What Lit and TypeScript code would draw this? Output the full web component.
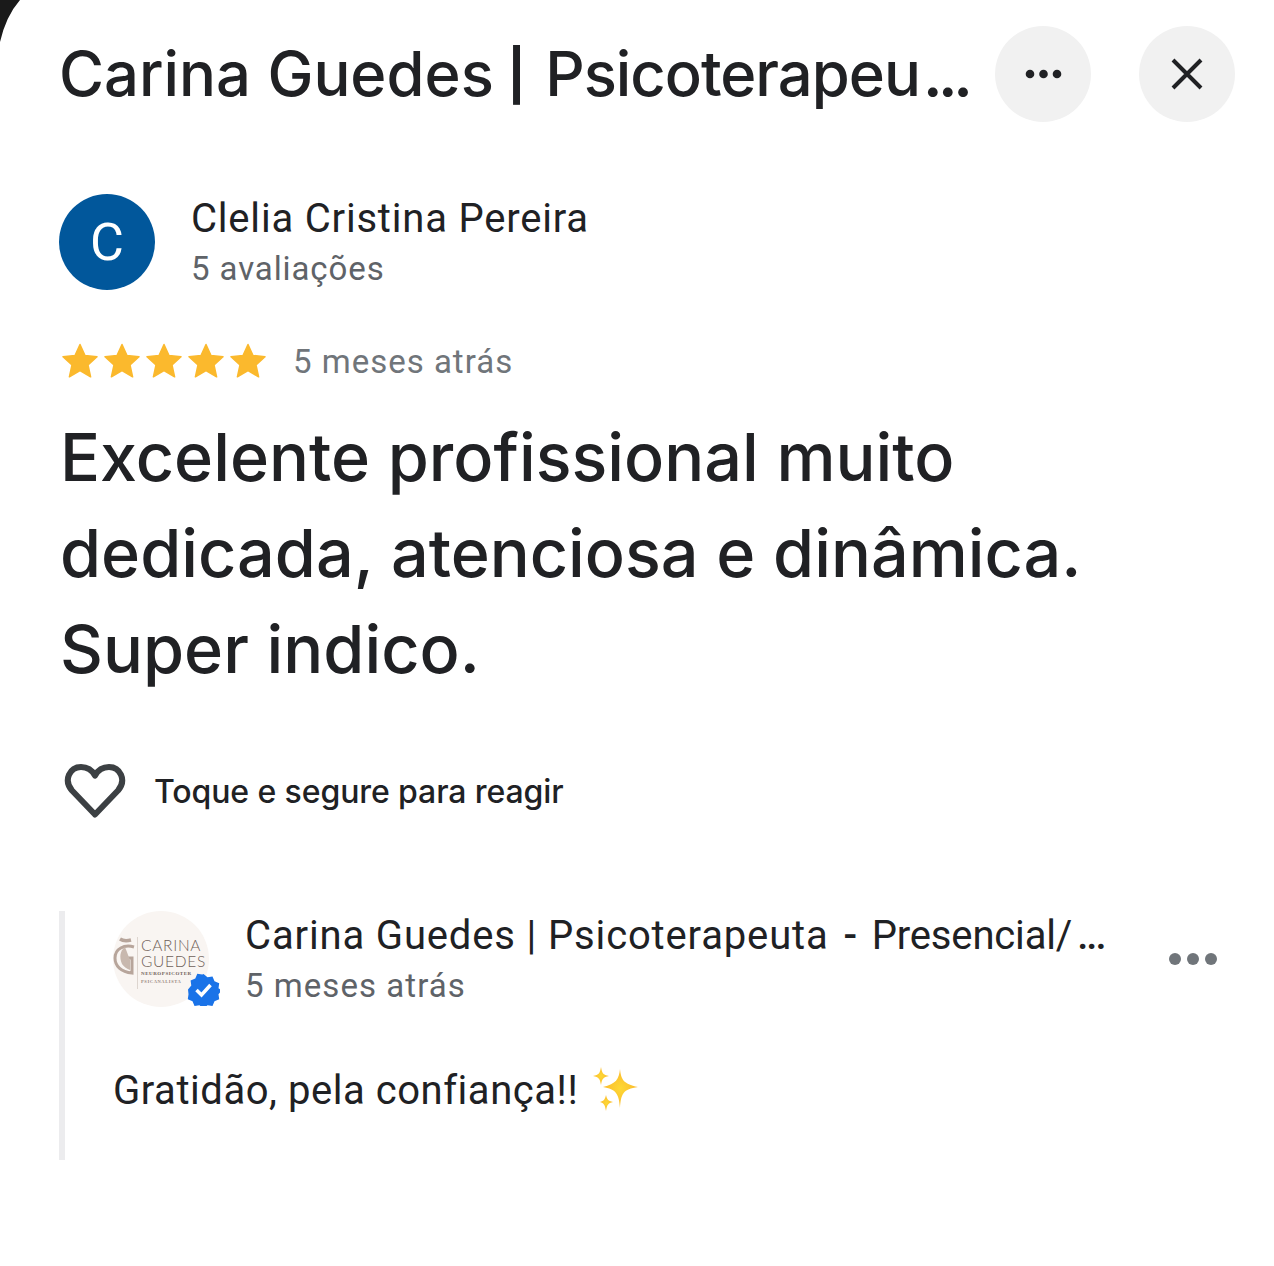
import { LitElement, html, css, svg } from "lit";
import { customElement } from "lit/decorators.js";

const star = svg`<path d="M18 1.5l5 11 12 1.3-9 8.100 2.600 11.900L18 27.700 7.400 33.800 10 21.900 1 13.800l12-1.300z" fill="#fbb92d" stroke="#fbb92d" stroke-width="1.500" stroke-linejoin="round"/>`;

@customElement("app-root")
export class AppRoot extends LitElement {
  static styles = css`
    :host { display: block; width: 1274px; height: 1266px; background: #fff; color: #202124; position: relative; overflow: hidden; font-family: Roboto, sans-serif; }
    .corner { position: absolute; left: 0; top: 0; width: 22px; height: 44px; }
    .page { display: flex; flex-direction: column; padding: 26px 39px 0 59px; box-sizing: border-box; height: 100%; }
    .head { display: flex; align-items: center; height: 96px; }
    .title { flex: 0 0 911px; min-width: 0; font: 500 61.500px/96px "Inter", sans-serif; color: #202124; white-space: nowrap; }
    .tight { word-spacing: -3px; }
    .pipe { font-size: 50px; font-weight: 700; vertical-align: 3px; }
    .tail { letter-spacing: -1px; margin-left: 3px; }
    .dots { letter-spacing: -4.500px; margin-left: 3px; font-weight: 600; }
    .btn { width: 96px; height: 96px; border-radius: 50%; background: #f1f1f1; display: flex; align-items: center; justify-content: center; flex: none; }
    .btn.more { margin-left: 25px; }
    .btn.close { margin-left: 48px; }
    .author { display: flex; align-items: center; gap: 37px; margin-top: 72px; height: 96px; }
    .avatar { width: 96px; height: 96px; border-radius: 50%; background: #01579b; color: #fff; font: 400 52px/97px Roboto, sans-serif; text-align: center; flex: none; }
    .who { padding-top: 4px; margin-left: -1px; }
    .name { font-size: 40px; line-height: 50px; letter-spacing: 0.8px; color: #202124; white-space: nowrap; }
    .sub { font-size: 33px; line-height: 50px; letter-spacing: 0.9px; color: #5f6368; white-space: nowrap; }
    .rating { display: flex; align-items: center; margin-top: 49px; height: 44px; padding-left: 3px; }
    .stars { display: flex; gap: 6px; }
    .stars svg { width: 36px; height: 36px; display: block; }
    .when { margin-left: 27px; font-size: 33px; letter-spacing: 1px; color: #70757a; white-space: nowrap; }
    .body { margin: 26px 0 0 1px; font: 500 66.500px/96px "Inter", sans-serif; color: #202124; white-space: nowrap; }
    .react { display: flex; align-items: center; margin-top: 62px; height: 64px; padding-left: 5px; gap: 28px; }
    .react svg { width: 62px; height: 56px; display: block; flex: none; }
    .react span { font: 500 32px/40px "Inter", sans-serif; letter-spacing: -0.100px; white-space: nowrap; padding-top: 2px; }
    .reply { display: flex; flex-direction: column; margin-top: 88px; height: 249px; border-left: 6px solid #ececee; padding-left: 48px; box-sizing: border-box; }
    .rhead { display: flex; align-items: center; height: 96px; }
    .logo { position: relative; width: 96px; height: 96px; flex: none; }
    .disc { width: 96px; height: 96px; border-radius: 50%; background: #f9f5f2; overflow: hidden; display: flex; color: #6f5f58; }
    .mono { width: 24px; height: 40px; flex: none; margin: 25px 0 0 0; }
    .words { margin: 26px 0 0 0; padding-left: 3px; border-left: 1px solid #ddd5cf; height: 52px; font-family: Lato, sans-serif; font-weight: 300; white-space: nowrap; }
    .w1 { font-size: 15.500px; line-height: 16px; letter-spacing: 0.7px; }
    .w3 { font-family: "Liberation Serif", serif; font-size: 5px; line-height: 9px; font-weight: 700; letter-spacing: 0.55px; }
    .w4 { font-family: "Liberation Serif", serif; font-size: 4.500px; line-height: 8px; font-weight: 700; letter-spacing: 0.6px; color: #998880; }
    .badge { position: absolute; left: 74px; top: 62px; width: 33px; height: 33px; }
    .rtext { flex: 0 0 863px; width: 863px; margin-left: 36px; min-width: 0; padding-top: 4px; }
    .rtext .sub { letter-spacing: 1.050px; }
    .rname { font-size: 40px; line-height: 50px; letter-spacing: 0.85px; white-space: nowrap; }
    .dash { padding: 0 3px 0 4px; font-weight: 500; }
    .place { letter-spacing: -0.150px; }
    .rdots { letter-spacing: -2px; margin-left: 5px; font-weight: 500; }
    .rmore { margin: 0 0 0 60px; width: 50px; height: 16px; flex: none; }
    .rbody { display: flex; align-items: center; margin-top: 51px; height: 64px; font-size: 40px; letter-spacing: 0.54px; white-space: nowrap; }
    .spark { width: 50px; height: 48px; margin-left: 13px; flex: none; }
  `;

  render() {
    return html`
      <svg class="corner" viewBox="0 0 22 44"><path d="M0 0H20Q6 16 0 42Z" fill="#1a1a1a"/></svg>
      <div class="page">
        <div class="head">
          <div class="title">Carina Guedes<span class="tight"> </span><span class="pipe">|</span> <span class="tail">Psicoterapeu</span><span class="dots">...</span></div>
          <div class="btn more"><svg width="40" height="12" viewBox="0 0 40 12"><g fill="#202124"><circle cx="7" cy="6" r="4.300"/><circle cx="20.500" cy="6" r="4.300"/><circle cx="34" cy="6" r="4.300"/></g></svg></div>
          <div class="btn close"><svg width="34" height="34" viewBox="0 0 34 34"><path d="M3 3L31 31M31 3L3 31" stroke="#202124" stroke-width="4" fill="none"/></svg></div>
        </div>
        <div class="author">
          <div class="avatar">C</div>
          <div class="who">
            <div class="name">Clelia Cristina Pereira</div>
            <div class="sub">5 avaliações</div>
          </div>
        </div>
        <div class="rating">
          <div class="stars">${[0, 1, 2, 3, 4].map(() => html`<svg viewBox="0 0 36 36">${star}</svg>`)}</div>
          <div class="when">5 meses atrás</div>
        </div>
        <div class="body">Excelente profissional muito<br />dedicada, atenciosa e dinâmica.<br />Super indico.</div>
        <div class="react">
          <svg viewBox="0 0 62 56"><path d="M31 51.500L8 27.500C-1 17 6 4 17 4c6 0 11 3 14 8.500C34 7 39 4 45 4c11 0 18 13 9 23.500z" fill="none" stroke="#3c4043" stroke-width="6" stroke-linejoin="round"/></svg>
          <span>Toque e segure para reagir</span>
        </div>
        <div class="reply">
          <div class="rhead">
            <div class="logo">
              <div class="disc">
                <svg class="mono" viewBox="0 0 24 40"><path d="M7 3c3 2 7 2 11 1" fill="none" stroke="#b7a59b" stroke-width="3.500"/><path d="M21 11C11 8 2 13 2 22c0 8 6 14 17 15V22H8" fill="none" stroke="#b7a59b" stroke-width="3"/><path d="M12 11c-5 4-6 10-3 17 2 3 5 5 8 6V24z" fill="#c8b8ae"/></svg>
                <div class="words">
                  <div class="w1">CARINA</div>
                  <div class="w1">GUEDES</div>
                  <div class="w3">NEUROPSICOTER</div>
                  <div class="w4">PSICANALISTA</div>
                </div>
              </div>
              <svg class="badge" viewBox="0 0 33 33"><path d="M16.500 1l4 3.300 5-.7 2 4.700 4.700 2-.7 5 3.300 2-3.300 4 .7 5-4.700 2-2 4.700-5-.7-4 3.300-4-3.300-5 .7-2-4.700-4.700-2 .7-5L1 16.500l3.300-4-.7-5 4.700-2 2-4.700 5 .7z" fill="#1a73e8"/><path d="M9.500 17l5 5 9-10" fill="none" stroke="#fff" stroke-width="3.500"/></svg>
            </div>
            <div class="rtext">
              <div class="rname">Carina Guedes | Psicoterapeuta <span class="dash">-</span> <span class="place">Presencial/</span><span class="rdots">...</span></div>
              <div class="sub">5 meses atrás</div>
            </div>
            <svg class="rmore" viewBox="0 0 50 16"><g fill="#70757a"><circle cx="7" cy="8" r="6"/><circle cx="25" cy="8" r="6"/><circle cx="43" cy="8" r="6"/></g></svg>
          </div>
          <div class="rbody">
            <span>Gratidão, pela confiança!!</span>
            <svg class="spark" viewBox="0 0 50 48"><defs><radialGradient id="g"><stop offset="0" stop-color="#fdd835"/><stop offset="1" stop-color="#fbb92d"/></radialGradient></defs><g fill="url(#g)"><path d="M29 5c1 10 3 15 18 18-15 2-17 7-18 21-1-14-4-19-17-21 13-3 16-8 17-18z" transform="translate(0 -2)"/><path d="M11 0c1 6 2 8 8 9-6 1-7 3-8 9-1-6-2-8-8-9 6-1 7-3 8-9z" transform="translate(-1 1)"/><path d="M14 30c1 4 2 6 7 7-5 1-6 3-7 9-1-6-2-8-6-9 4-1 5-3 6-7z" transform="translate(1 -1)"/></g></svg>
          </div>
        </div>
      </div>
    `;
  }
}
